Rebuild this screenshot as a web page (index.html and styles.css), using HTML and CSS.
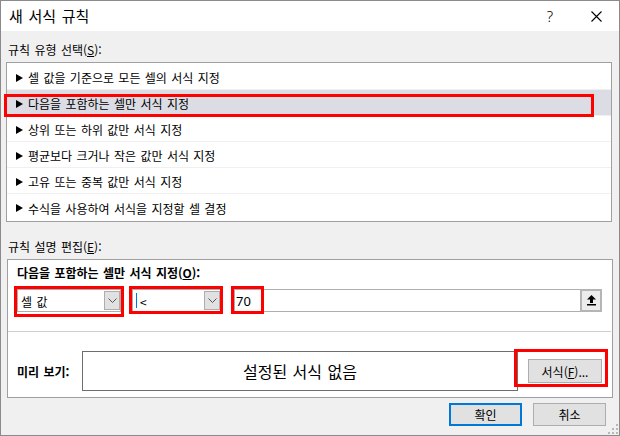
FILE: index.html
```html
<!DOCTYPE html>
<html lang="ko">
<head>
    <meta charset="UTF-8">
    <title>새 서식 규칙</title>
    <link rel="stylesheet" href="styles.css">
</head>
<body>
    <div class="dialog">
        <div class="titlebar">
            <span class="title">새 서식 규칙</span>
            <span class="title-btn help">?</span>
            <span class="title-btn close">
                <svg width="11" height="11" viewBox="0 0 11 11"><path d="M0.5 0.5L10.5 10.5M10.5 0.5L0.5 10.5" stroke="#000" stroke-width="1.1" fill="none"/></svg>
            </span>
        </div>

        <div class="label label-type">규칙 유형 선택(<u>S</u>):</div>
        <div class="rule-list">
            <div class="rule"><svg class="arrow" width="7" height="8" viewBox="0 0 7 8"><polygon points="0,0 7,4 0,8" fill="#000"/></svg>셀 값을 기준으로 모든 셀의 서식 지정</div>
            <div class="rule selected"><svg class="arrow" width="7" height="8" viewBox="0 0 7 8"><polygon points="0,0 7,4 0,8" fill="#000"/></svg>다음을 포함하는 셀만 서식 지정<span class="mark mark-rule"></span></div>
            <div class="rule"><svg class="arrow" width="7" height="8" viewBox="0 0 7 8"><polygon points="0,0 7,4 0,8" fill="#000"/></svg>상위 또는 하위 값만 서식 지정</div>
            <div class="rule"><svg class="arrow" width="7" height="8" viewBox="0 0 7 8"><polygon points="0,0 7,4 0,8" fill="#000"/></svg>평균보다 크거나 작은 값만 서식 지정</div>
            <div class="rule"><svg class="arrow" width="7" height="8" viewBox="0 0 7 8"><polygon points="0,0 7,4 0,8" fill="#000"/></svg>고유 또는 중복 값만 서식 지정</div>
            <div class="rule"><svg class="arrow" width="7" height="8" viewBox="0 0 7 8"><polygon points="0,0 7,4 0,8" fill="#000"/></svg>수식을 사용하여 서식을 지정할 셀 결정</div>
        </div>

        <div class="label label-edit">규칙 설명 편집(<u>E</u>):</div>
        <div class="group">
            <div class="group-title">다음을 포함하는 셀만 서식 지정(<u>O</u>):</div>

            <div class="criteria">
                <div class="combo combo-type">
                    <span class="combo-text">셀 값</span>
                    <span class="drop"><svg width="9" height="5" viewBox="0 0 9 5"><path d="M0.5 0.5L4.5 4.5L8.5 0.5" stroke="#555" fill="none"/></svg></span>
                    <span class="mark mark-type"></span>
                </div>
                <div class="combo combo-op">
                    <span class="caret"></span>
                    <span class="combo-text">&lt;</span>
                    <span class="drop"><svg width="9" height="5" viewBox="0 0 9 5"><path d="M0.5 0.5L4.5 4.5L8.5 0.5" stroke="#555" fill="none"/></svg></span>
                    <span class="mark mark-op"></span>
                </div>
                <div class="value-box">
                    <span class="value">70</span>
                    <span class="mark mark-value"></span>
                    <span class="ref-btn">
                        <svg width="9" height="11" viewBox="0 0 9 11"><polygon points="4.5,0 9,4.5 0,4.5" fill="#000"/><rect x="3" y="4" width="3" height="4" fill="#000"/><rect x="0" y="9" width="9" height="1.5" fill="#000"/></svg>
                    </span>
                </div>
            </div>

            <div class="divider"></div>

            <div class="preview-row">
                <div class="preview-label">미리 보기:</div>
                <div class="preview">설정된 서식 없음</div>
                <div class="format-wrap">
                    <button class="btn format-btn">서식(<u>F</u>)...</button>
                    <span class="mark mark-format"></span>
                </div>
            </div>
        </div>

        <div class="actions">
            <button class="btn btn-default">확인</button>
            <button class="btn">취소</button>
        </div>

        <svg class="grip" width="10" height="10" viewBox="0 0 10 10">
            <rect x="8" y="0" width="2" height="2" fill="#b8b8b8"/>
            <rect x="4" y="4" width="2" height="2" fill="#b8b8b8"/>
            <rect x="8" y="4" width="2" height="2" fill="#b8b8b8"/>
            <rect x="0" y="8" width="2" height="2" fill="#b8b8b8"/>
            <rect x="4" y="8" width="2" height="2" fill="#b8b8b8"/>
            <rect x="8" y="8" width="2" height="2" fill="#b8b8b8"/>
        </svg>
    </div>
</body>
</html>
```

FILE: styles.css
```css
body {
    margin: 0;
    background: #fff;
}

.dialog {
    position: relative;
    width: 620px;
    height: 436px;
    box-sizing: border-box;
    border: 1px solid #8a8a8a;
    background: #f0f0f0;
    font-family: "Noto Sans CJK KR", sans-serif;
    font-size: 12px;
    letter-spacing: 0;
    word-spacing: 1px;
    color: #000;
}

/* Title bar */
.titlebar {
    height: 30px;
    background: #fff;
    display: flex;
    align-items: center;
}

.title {
    flex: 1;
    padding-left: 8px;
    font-size: 15px;
    letter-spacing: -0.2px;
    word-spacing: 2px;
    line-height: 30px;
}

.title-btn {
    width: 46px;
    height: 30px;
    display: flex;
    justify-content: center;
    align-items: center;
}

.help {
    font-family: "Noto Sans", sans-serif;
    font-size: 15px;
    font-weight: 300;
}

/* Labels */
.label {
    padding-left: 7px;
    line-height: 16px;
}

.label-type {
    margin-top: 11px;
}

.label-edit {
    margin-top: 17px;
}

u {
    text-decoration-thickness: 1px;
    text-underline-offset: 1px;
}

/* Rule type list */
.rule-list {
    margin: 4px 7px 0 5px;
    border: 1px solid #a0a0a0;
    background: #fff;
    padding: 1px 0;
}

.rule {
    position: relative;
    height: 26px;
    box-sizing: border-box;
    display: flex;
    align-items: center;
    padding: 2px 0 0 9px;
    border-bottom: 1px solid #f0f0f0;
}

.rule:last-child {
    border-bottom: none;
}

.rule.selected {
    background: #dcdce4;
}

.arrow {
    margin-right: 5px;
    flex-shrink: 0;
}

/* Red highlight boxes */
.mark {
    position: absolute;
    box-sizing: border-box;
    border: 3px solid #f00;
}

.mark-rule {
    left: -3px;
    top: 4px;
    width: 590px;
    height: 23px;
}

.mark-type {
    left: -4px;
    top: -4px;
    width: 110px;
    height: 31px;
}

.mark-op {
    left: -4px;
    top: -4px;
    width: 94px;
    height: 28px;
}

.mark-value {
    left: -4px;
    top: -4px;
    width: 33px;
    height: 28px;
}

.mark-format {
    left: -14px;
    top: -10px;
    width: 94px;
    height: 38px;
}

/* Rule description group */
.group {
    margin: 4px 6px 0 6px;
    border: 1px solid #a0a0a0;
    background: #fff;
    padding: 5px 10px 6px 9px;
}

.group-title {
    font-weight: bold;
    line-height: 16px;
}

.criteria {
    display: flex;
    margin-top: 8px;
    height: 23px;
}

.combo {
    position: relative;
    box-sizing: border-box;
    height: 23px;
    border: 1px solid #adadad;
    background: #fff;
    display: flex;
    align-items: center;
    padding-left: 3px;
}

.combo-type {
    width: 104px;
}

.combo-op {
    width: 89px;
    margin-left: 11px;
}

.combo-text {
    padding-top: 1px;
}

.caret {
    width: 1px;
    height: 15px;
    background: #0078d7;
    margin-right: 3px;
}

.drop {
    margin-left: auto;
    margin-right: 0;
    width: 16px;
    height: 19px;
    box-sizing: border-box;
    background: #e1e1e1;
    border: 1px solid #adadad;
    display: flex;
    justify-content: center;
    align-items: center;
}

.value-box {
    position: relative;
    flex: 1;
    margin-left: 13px;
    box-sizing: border-box;
    height: 23px;
    border: 1px solid #adadad;
    background: #fff;
    display: flex;
    align-items: center;
    padding-left: 1px;
}

.value {
    font-family: "Noto Sans", sans-serif;
    font-size: 13px;
    letter-spacing: 0;
}

.ref-btn {
    margin: -1px -1px -1px auto;
    width: 22px;
    height: 23px;
    box-sizing: border-box;
    border: 2px solid #b5b5b5;
    background: #ececec;
    display: flex;
    justify-content: center;
    align-items: center;
}

.divider {
    height: 1px;
    background: #cfcfcf;
    margin: 19px -9px 0 -9px;
}

.preview-row {
    display: flex;
    align-items: center;
    margin-top: 19px;
}

.preview-label {
    width: 65px;
    font-weight: bold;
}

.preview {
    width: 436px;
    height: 40px;
    box-sizing: border-box;
    border: 1px solid #6e6e6e;
    display: flex;
    justify-content: center;
    align-items: center;
    font-size: 16px;
    letter-spacing: 0;
    word-spacing: 1px;
}

.format-wrap {
    position: relative;
    margin-left: 10px;
    display: flex;
}

/* Buttons */
.btn {
    width: 73px;
    height: 23px;
    box-sizing: border-box;
    background: #e1e1e1;
    border: 1px solid #adadad;
    font-family: inherit;
    font-size: 12px;
    color: #000;
    padding: 0;
}

.format-btn {
    width: 74px;
    height: 24px;
}

.btn-default {
    border: 2px solid #0078d7;
}

.actions {
    display: flex;
    justify-content: flex-end;
    gap: 11px;
    margin: 5px 13px 0 0;
}

.grip {
    position: absolute;
    right: 1px;
    bottom: 1px;
}
```
